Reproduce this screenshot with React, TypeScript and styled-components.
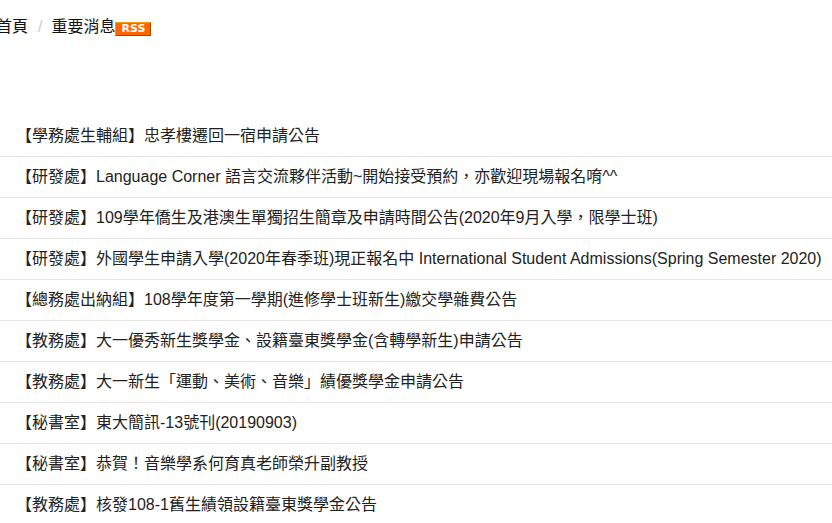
import styled, { createGlobalStyle } from 'styled-components'

const GlobalStyle = createGlobalStyle`
  html, body {
    margin: 0;
    padding: 0;
    background: #fff;
    overflow: hidden;
  }
`

const Page = styled.div`
  width: 832px;
  height: 523px;
  overflow: hidden;
  font-family: "Liberation Sans", "Noto Sans CJK TC", sans-serif;
  font-size: 16px;
  color: #222;
`

const Breadcrumb = styled.div`
  display: flex;
  align-items: center;
  height: 20px;
  margin: 17px 0 0 -4px;
  color: #111;
`

const Crumb = styled.span`
  line-height: 20px;
`

const Divider = styled.span`
  margin: 0 9px 0 10px;
  color: #ccc;
`

const RssBadge = styled.span`
  width: 36px;
  height: 14px;
  margin-top: 3px;
  background: #f60;
  border-style: solid;
  border-width: 1px;
  border-color: #f90 #a40 #a40 #f90;
  box-sizing: border-box;
  color: #fff;
  font-family: "DejaVu Sans", sans-serif;
  font-size: 11px;
  font-weight: 700;
  line-height: 12px;
  text-align: center;
`

const List = styled.ul`
  list-style: none;
  margin: 79px 0 0;
  padding: 0;
`

const Row = styled.li`
  height: 40px;
  line-height: 40px;
  padding-left: 16px;
  border-bottom: 1px solid #e5e5e5;
  white-space: nowrap;
`

const items = [
  '【學務處生輔組】忠孝樓遷回一宿申請公告',
  '【研發處】Language Corner 語言交流夥伴活動~開始接受預約，亦歡迎現場報名唷^^',
  '【研發處】109學年僑生及港澳生單獨招生簡章及申請時間公告(2020年9月入學，限學士班)',
  '【研發處】外國學生申請入學(2020年春季班)現正報名中 International Student Admissions(Spring Semester 2020)',
  '【總務處出納組】108學年度第一學期(進修學士班新生)繳交學雜費公告',
  '【教務處】大一優秀新生獎學金、設籍臺東獎學金(含轉學新生)申請公告',
  '【教務處】大一新生「運動、美術、音樂」績優獎學金申請公告',
  '【秘書室】東大簡訊-13號刊(20190903)',
  '【秘書室】恭賀！音樂學系何育真老師榮升副教授',
  '【教務處】核發108-1舊生績領設籍臺東獎學金公告',
]

const App = () => {
  return (
    <Page>
      <GlobalStyle />
      <Breadcrumb>
        <Crumb>首頁</Crumb>
        <Divider>/</Divider>
        <Crumb>重要消息</Crumb>
        <RssBadge>RSS</RssBadge>
      </Breadcrumb>
      <List>
        {items.map((item) => (
          <Row key={item}>{item}</Row>
        ))}
      </List>
    </Page>
  )
}

export default App
